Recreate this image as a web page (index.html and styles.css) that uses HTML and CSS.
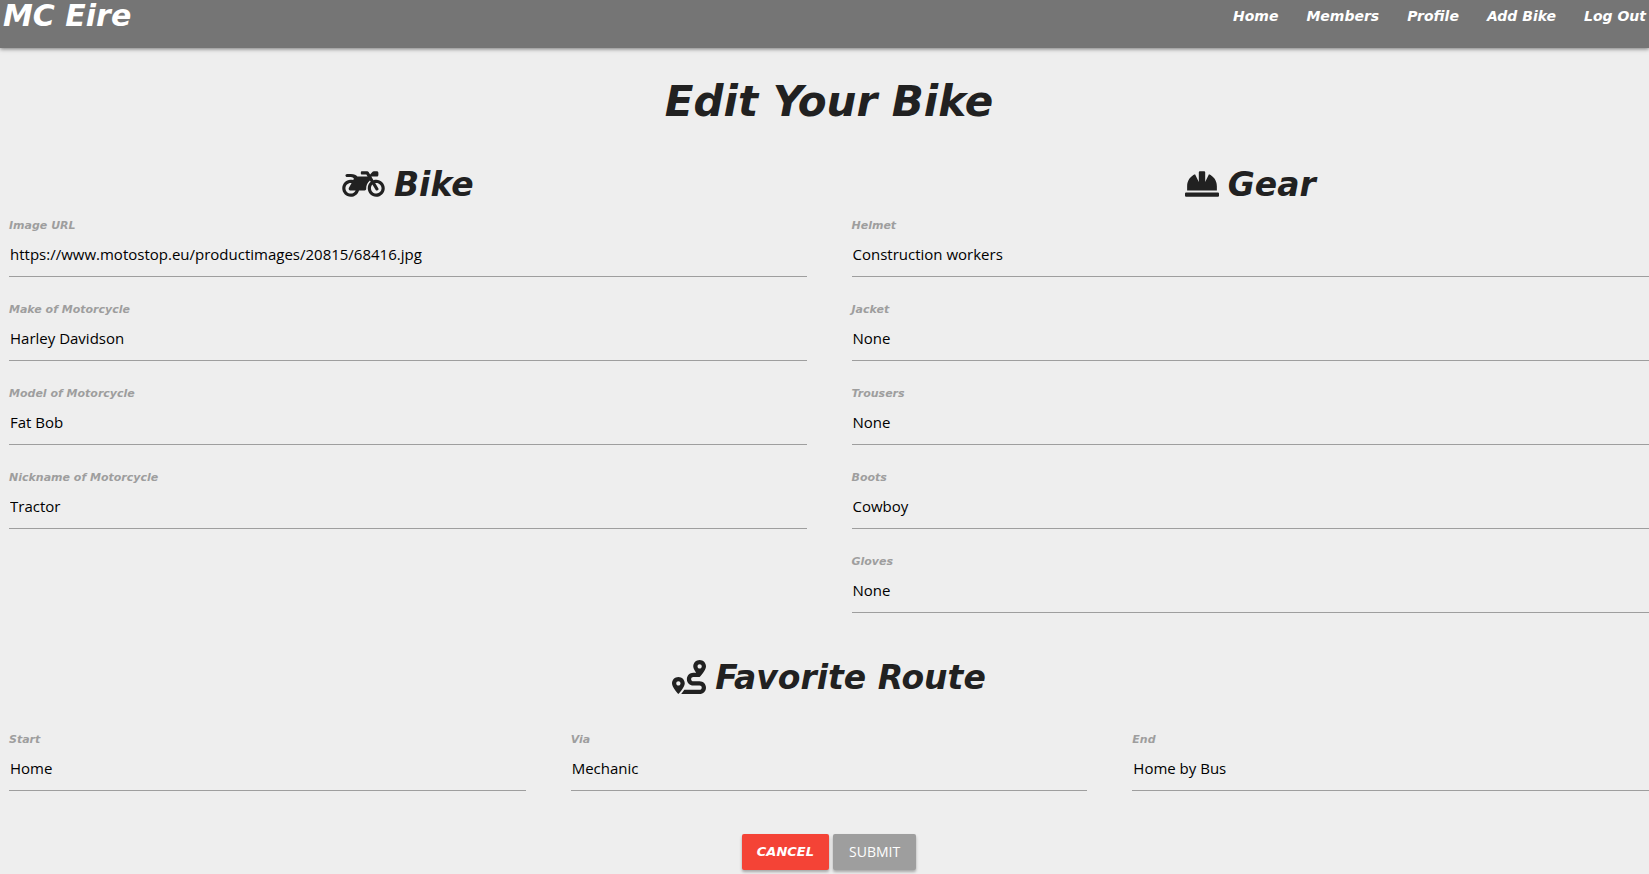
FILE: index.html
```html
<!DOCTYPE html>
<html lang="en">
<head>
<meta charset="utf-8">
<title>MC Eire</title>
<link rel="stylesheet" href="styles.css">
</head>
<body>
<nav class="navbar">
  <a class="brand" href="#">MC Eire</a>
  <div class="nav-links">
    <a href="#">Home</a>
    <a href="#">Members</a>
    <a href="#">Profile</a>
    <a href="#">Add Bike</a>
    <a href="#">Log Out</a>
  </div>
</nav>
<main class="page">
  <h1 class="page-title">Edit Your Bike</h1>
  <form>
    <div class="columns">
      <section>
        <h2 class="section-title">
          <svg class="icon icon-wide" viewBox="0 0 640 512" aria-hidden="true"><path d="M512.9 192c-14.9-.1-29.1 2.3-42.4 6.9L437.6 144H520c13.3 0 24-10.7 24-24V88c0-13.3-10.7-24-24-24h-45.3c-6.8 0-13.3 2.9-17.8 7.9l-37.5 41.7-22.8-38C392.2 68.4 384.4 64 376 64h-80c-8.8 0-16 7.2-16 16v16c0 8.8 7.2 16 16 16h66.4l19.2 32H227.9c-17.7-23.1-44.9-40-99.9-40H72.5C59 104 47.7 115 48 128.5c.2 13 10.9 23.5 24 23.5h56c24.5 0 38.7 10.9 47.8 24.8l-11.3 20.5c-13-3.9-26.9-5.7-41.3-5.2C55.9 194.5 1.6 249.6 0 317c-1.6 72.1 56.3 131 128 131 59.6 0 109.7-40.8 124-96h84.2c13.7 0 24.6-11.4 24-25.1-2.1-47.1 17.5-93.7 56.2-125l12.5 20.8c-27.6 23.7-45.1 58.9-44.8 98.2.5 69.6 57.2 126.5 126.8 127.1 71.6.7 129.8-57.5 129.2-129.1-.7-69.6-57.6-126.4-127.2-126.9zM128 400c-44.1 0-80-35.9-80-80s35.9-80 80-80c4.2 0 8.4.3 12.5 1L99 316.4c-8.8 16 2.8 35.6 21 35.6h81.3c-12.4 28.2-40.6 48-73.3 48zm463.9-75.6c-2.2 40.6-35 73.4-75.5 75.5-46.1 2.5-84.4-34.3-84.4-79.9 0-21.4 8.4-40.8 22.1-55.1l49.4 82.4c4.5 7.6 14.4 10 22 5.5l13.7-8.2c7.6-4.5 10-14.4 5.5-22l-48.6-80.9c5.2-1.1 10.5-1.6 15.9-1.6 45.6-.1 82.3 38.2 79.9 84.3z"/></svg>
          Bike
        </h2>
        <div class="field"><label for="image">Image URL</label><input id="image" type="text" value="https://www.motostop.eu/productimages/20815/68416.jpg"></div>
        <div class="field"><label for="make">Make of Motorcycle</label><input id="make" type="text" value="Harley Davidson"></div>
        <div class="field"><label for="model">Model of Motorcycle</label><input id="model" type="text" value="Fat Bob"></div>
        <div class="field"><label for="nickname">Nickname of Motorcycle</label><input id="nickname" type="text" value="Tractor"></div>
      </section>
      <section>
        <h2 class="section-title">
          <svg class="icon" viewBox="0 0 512 512" aria-hidden="true"><path d="M480 288c0-80.25-49.28-148.92-119.19-177.62L304 224V80a16 16 0 0 0-16-16h-64a16 16 0 0 0-16 16v144l-56.81-113.62C81.28 139.08 32 207.75 32 288v64h448zm16 96H16a16 16 0 0 0-16 16v32a16 16 0 0 0 16 16h480a16 16 0 0 0 16-16v-32a16 16 0 0 0-16-16z"/></svg>
          Gear
        </h2>
        <div class="field"><label for="helmet">Helmet</label><input id="helmet" type="text" value="Construction workers"></div>
        <div class="field"><label for="jacket">Jacket</label><input id="jacket" type="text" value="None"></div>
        <div class="field"><label for="trousers">Trousers</label><input id="trousers" type="text" value="None"></div>
        <div class="field"><label for="boots">Boots</label><input id="boots" type="text" value="Cowboy"></div>
        <div class="field"><label for="gloves">Gloves</label><input id="gloves" type="text" value="None"></div>
      </section>
    </div>
    <section class="route">
      <h2 class="section-title">
        <svg class="icon" viewBox="0 0 512 512" aria-hidden="true"><path d="M416 320h-96c-17.6 0-32-14.4-32-32s14.4-32 32-32h96s96-107 96-160-43-96-96-96-96 43-96 96c0 25.5 22.2 63.4 45.3 96H320c-52.9 0-96 43.1-96 96s43.1 96 96 96h96c17.6 0 32 14.4 32 32s-14.4 32-32 32H185.5c-16 24.8-33.8 47.7-47.3 64H416c52.9 0 96-43.1 96-96s-43.1-96-96-96zm0-256c17.7 0 32 14.3 32 32s-14.3 32-32 32-32-14.3-32-32 14.3-32 32-32zM96 256c-53 0-96 43-96 96s96 160 96 160 96-107 96-160-43-96-96-96zm0 128c-17.7 0-32-14.3-32-32s14.3-32 32-32 32 14.3 32 32-14.3 32-32 32z"/></svg>
        Favorite Route
      </h2>
      <div class="columns columns-three">
        <div class="field"><label for="start">Start</label><input id="start" type="text" value="Home"></div>
        <div class="field"><label for="via">Via</label><input id="via" type="text" value="Mechanic"></div>
        <div class="field"><label for="end">End</label><input id="end" type="text" value="Home by Bus"></div>
      </div>
    </section>
    <div class="actions">
      <a class="btn btn-cancel" href="#">Cancel</a>
      <button class="btn btn-submit" type="submit">Submit</button>
    </div>
  </form>
</main>
</body>
</html>
```
FILE: styles.css
```css
* {
  box-sizing: border-box;
}

body {
  margin: 0;
  background: #eee;
  color: #212121;
  font: italic bold 14px/24px "DejaVu Sans", sans-serif;
}

a {
  color: inherit;
  text-decoration: none;
}

.navbar {
  display: flex;
  justify-content: space-between;
  height: 48px;
  padding: 0 3px;
  background: #757575;
  color: #fff;
  box-shadow: 0 1px 4px rgba(0, 0, 0, 0.5);
}

.brand {
  font-size: 30px;
  line-height: 32px;
}

.nav-links {
  display: flex;
  gap: 28px;
  line-height: 32px;
}

.page {
  padding: 32px 0 4px 9px;
}

.page-title {
  margin: 0 0 37px;
  font-size: 42px;
  line-height: 44px;
  text-align: center;
}

.section-title {
  display: flex;
  align-items: center;
  justify-content: center;
  gap: 9px;
  margin: 0 0 11px;
  font-size: 33px;
  line-height: 48px;
}

.icon {
  width: 34px;
  height: 34px;
  margin-bottom: 2px;
  fill: currentColor;
}

.icon-wide {
  width: 43px;
}

.columns {
  display: grid;
  grid-template-columns: repeat(2, 1fr);
  column-gap: 45px;
}

.columns-three {
  grid-template-columns: repeat(3, 1fr);
}

.field {
  height: 84px;
}

.field label {
  display: block;
  color: #9e9e9e;
  font-size: 11px;
  line-height: 12px;
}

.field input {
  display: block;
  width: 100%;
  height: 45px;
  padding: 0 1px 1px;
  border: 0;
  border-bottom: 1px solid #9e9e9e;
  background: transparent;
  color: #000;
  font: 15px "Open Sans", "Noto Sans", sans-serif;
  outline: none;
}

.route .section-title {
  margin: 14px 0 32px;
}

.actions {
  display: flex;
  justify-content: center;
  gap: 4px;
  margin-top: 16px;
}

.btn {
  height: 36px;
  padding: 0 16px;
  border: 0;
  border-radius: 2px;
  color: #fff;
  font-size: 13px;
  line-height: 36px;
  text-transform: uppercase;
  box-shadow: 0 2px 3px rgba(0, 0, 0, 0.3);
}

.btn-cancel {
  padding: 0 15px;
  background: #f44336;
}

.btn-submit {
  background: #9e9e9e;
  font-family: "Open Sans", "Noto Sans", sans-serif;
  font-size: 14px;
}
```
